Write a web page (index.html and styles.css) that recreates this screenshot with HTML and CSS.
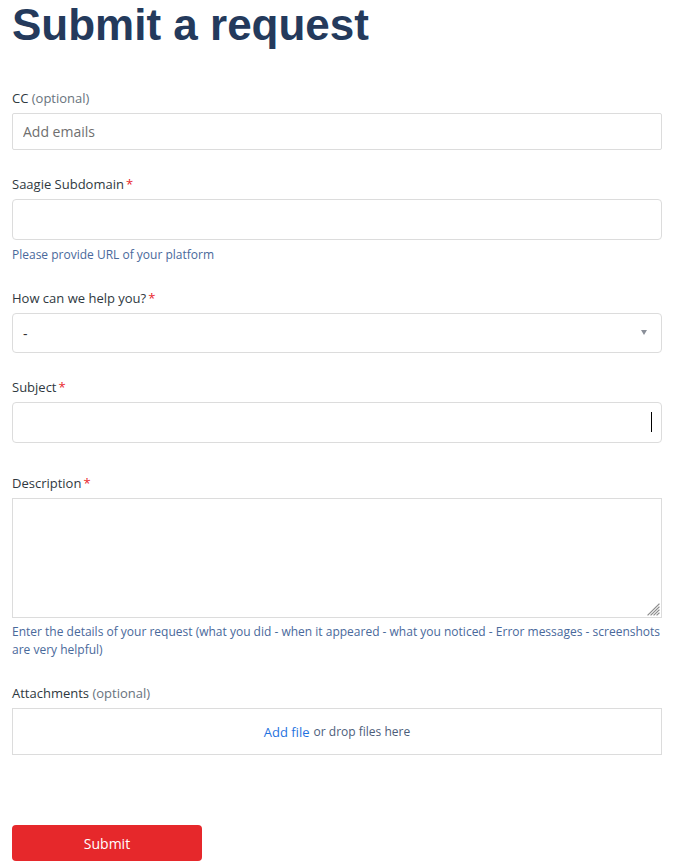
FILE: index.html
```html
<!DOCTYPE html>
<html lang="en">
<head>
<meta charset="utf-8">
<title>Submit a request</title>
<link rel="stylesheet" href="styles.css">
</head>
<body>
<div class="page">
  <h1 class="title">Submit a request</h1>
  <form class="form">
    <div class="field">
      <label class="label">CC <span class="optional">(optional)</span></label>
      <input class="input input-cc" type="text" placeholder="Add emails">
    </div>
    <div class="field">
      <label class="label">Saagie Subdomain<span class="req">*</span></label>
      <input class="input" type="text">
      <p class="hint">Please provide URL of your platform</p>
    </div>
    <div class="field">
      <label class="label">How can we help you?<span class="req">*</span></label>
      <div class="select">
        <span class="select-value">-</span>
        <span class="select-arrow"></span>
      </div>
    </div>
    <div class="field field-subject">
      <label class="label">Subject<span class="req">*</span></label>
      <div class="input-wrap">
        <input class="input" type="text">
        <span class="caret"></span>
      </div>
    </div>
    <div class="field">
      <label class="label">Description<span class="req">*</span></label>
      <div class="textarea-wrap">
        <textarea class="textarea"></textarea>
        <svg class="grip" width="14" height="14" viewBox="0 0 14 14" aria-hidden="true">
          <g stroke="#8c8c8c" stroke-width="1.2" stroke-linecap="square">
            <line x1="13" y1="2" x2="2" y2="13"/>
            <line x1="13" y1="5" x2="5" y2="13"/>
            <line x1="13" y1="8" x2="8" y2="13"/>
            <line x1="13" y1="11" x2="11" y2="13"/>
          </g>
        </svg>
      </div>
      <p class="hint hint-tight">Enter the details of your request (what you did - when it appeared - what you noticed - Error messages - screenshots are very helpful)</p>
    </div>
    <div class="field">
      <label class="label">Attachments <span class="optional">(optional)</span></label>
      <div class="dropzone"><a class="add-file">Add file</a> or drop files here</div>
    </div>
    <div class="actions">
      <button class="submit" type="button">Submit</button>
    </div>
  </form>
</div>
</body>
</html>
```
FILE: styles.css
```css
* { box-sizing: border-box; }
html, body { margin: 0; padding: 0; background: #fff; }
body {
  font-family: "Open Sans", "Noto Sans", sans-serif;
  color: #2f3941;
}
.page {
  padding: 0 18px 0 12px;
}
.title {
  margin: 0;
  font-family: "Liberation Sans", Arial, sans-serif;
  font-weight: 700;
  font-size: 44px;
  line-height: 50px;
  color: #243a5c;
}
.form {
  margin-top: 39px;
  display: flex;
  flex-direction: column;
}
.field {
  display: flex;
  flex-direction: column;
  margin-bottom: 25px;
}
.field-subject { margin-bottom: 31px; }
.label {
  display: block;
  font-size: 13px;
  line-height: 18px;
  margin-bottom: 6px;
  color: #2f3941;
}
.optional { color: #68737d; }
.req { color: #e8262b; margin-left: 2px; }
.input {
  display: block;
  width: 100%;
  height: 41px;
  border: 1px solid #dcdcdc;
  border-radius: 4px;
  padding: 0 10px;
  font-family: "Open Sans", "Noto Sans", sans-serif;
  font-size: 14px;
  color: #333;
  outline: none;
  background: #fff;
}
.input-cc { height: 37px; border-radius: 2px; }
.input::placeholder { color: #6f6f6f; }
.hint {
  margin: 6px 0 0;
  font-size: 12px;
  line-height: 18px;
  color: #49699b;
}
.hint-tight { margin-top: 5px; }
.select {
  position: relative;
  display: flex;
  align-items: center;
  height: 40px;
  border: 1px solid #dcdcdc;
  border-radius: 4px;
  padding: 0 10px;
  font-size: 14px;
  color: #333;
}
.select-value { line-height: 20px; padding-top: 2px; }
.select-arrow {
  position: absolute;
  right: 14px;
  top: 16px;
  width: 0;
  height: 0;
  border-left: 3px solid transparent;
  border-right: 3px solid transparent;
  border-top: 5px solid #8a8f99;
}
.input-wrap { position: relative; }
.caret {
  position: absolute;
  right: 10px;
  top: 10px;
  width: 1px;
  height: 20px;
  background: #000;
}
.textarea-wrap { position: relative; }
.textarea {
  display: block;
  width: 100%;
  height: 120px;
  border: 1px solid #dcdcdc;
  border-radius: 0;
  padding: 8px 10px;
  font-family: "Open Sans", "Noto Sans", sans-serif;
  font-size: 14px;
  resize: none;
  outline: none;
  margin: 0;
}
.grip {
  position: absolute;
  right: 2px;
  bottom: 2px;
}
.dropzone {
  height: 47px;
  border: 1px solid #dcdcdc;
  display: flex;
  align-items: center;
  justify-content: center;
  font-size: 12px;
  color: #4c5d7a;
  gap: 4px;
}
.add-file {
  color: #1f73e0;
  font-size: 13px;
  cursor: pointer;
}
.actions {
  margin-top: 45px;
}
.submit {
  width: 190px;
  height: 36px;
  border: 0;
  border-radius: 4px;
  background: #e6282b;
  color: #fff;
  font-family: "Open Sans", "Noto Sans", sans-serif;
  font-size: 14px;
  padding: 0;
  cursor: pointer;
}
```
